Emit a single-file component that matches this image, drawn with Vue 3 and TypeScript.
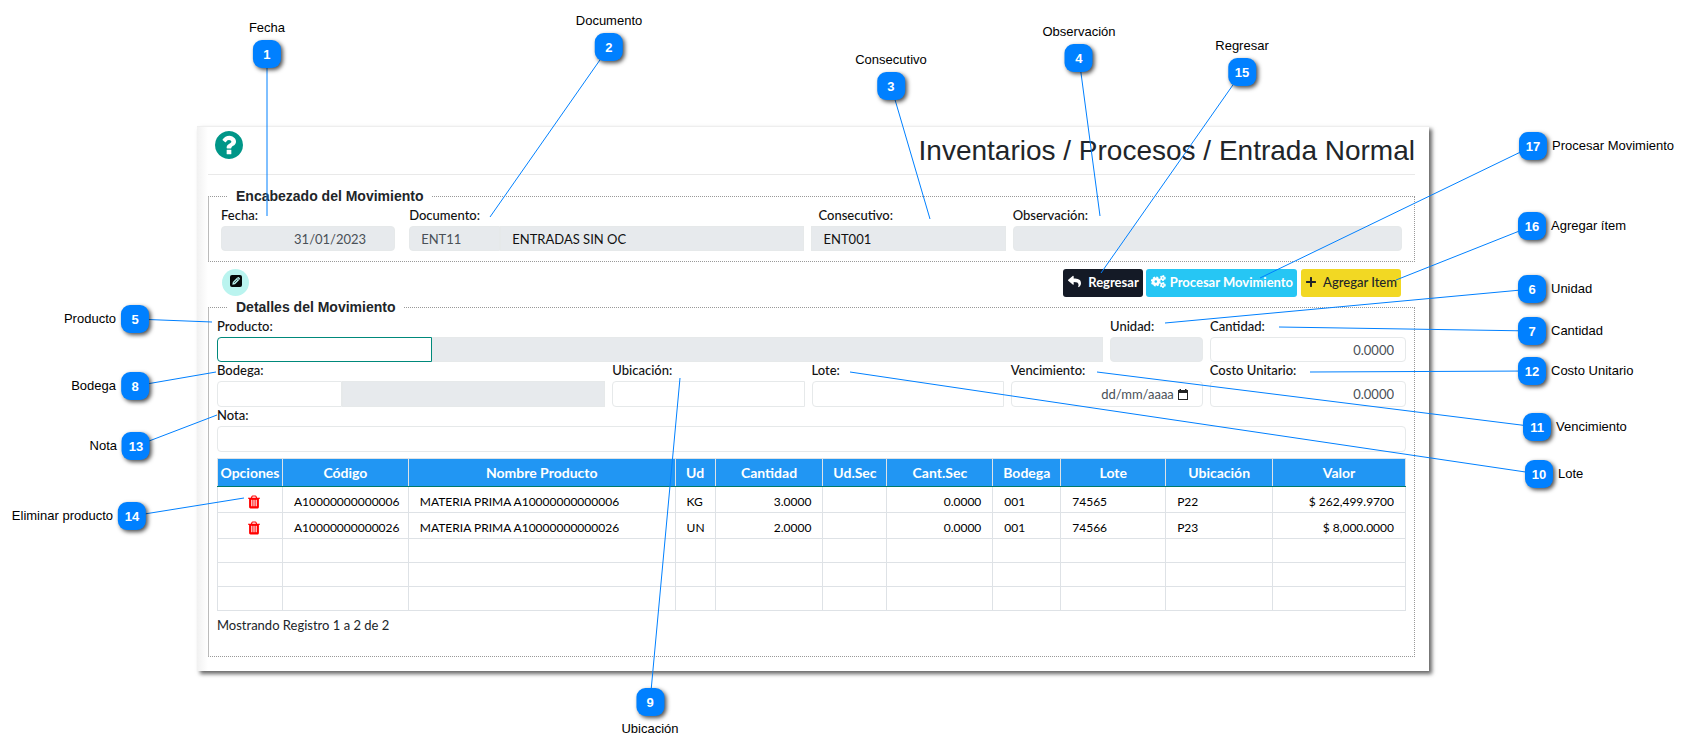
<script setup lang="ts">
import { ref } from 'vue'

type Side = 'top' | 'bottom' | 'left' | 'right'

interface Callout {
  n: number
  label: string
  x: number
  y: number
  tx: number
  ty: number
  side: Side
}

interface Item {
  codigo: string
  nombre: string
  ud: string
  cantidad: string
  udSec: string
  cantSec: string
  bodega: string
  lote: string
  ubicacion: string
  valor: string
}

const callouts: Callout[] = [
  { n: 1, label: 'Fecha', x: 267, y: 54, tx: 267, ty: 216, side: 'top' },
  { n: 2, label: 'Documento', x: 609, y: 47, tx: 490, ty: 217, side: 'top' },
  { n: 3, label: 'Consecutivo', x: 891, y: 86, tx: 930, ty: 219, side: 'top' },
  { n: 4, label: 'Observación', x: 1079, y: 58, tx: 1100, ty: 216, side: 'top' },
  { n: 5, label: 'Producto', x: 135, y: 319, tx: 212, ty: 322, side: 'left' },
  { n: 6, label: 'Unidad', x: 1532, y: 289, tx: 1165, ty: 323, side: 'right' },
  { n: 7, label: 'Cantidad', x: 1532, y: 331, tx: 1279, ty: 327, side: 'right' },
  { n: 8, label: 'Bodega', x: 135, y: 386, tx: 216, ty: 372, side: 'left' },
  { n: 9, label: 'Ubicación', x: 650, y: 702, tx: 680, ty: 378, side: 'bottom' },
  { n: 10, label: 'Lote', x: 1539, y: 474, tx: 850, ty: 372, side: 'right' },
  { n: 11, label: 'Vencimiento', x: 1537, y: 427, tx: 1097, ty: 372, side: 'right' },
  { n: 12, label: 'Costo Unitario', x: 1532, y: 371, tx: 1310, ty: 372, side: 'right' },
  { n: 13, label: 'Nota', x: 136, y: 446, tx: 217, ty: 415, side: 'left' },
  { n: 14, label: 'Eliminar producto', x: 132, y: 516, tx: 244, ty: 498, side: 'left' },
  { n: 15, label: 'Regresar', x: 1242, y: 72, tx: 1101, ty: 273, side: 'top' },
  { n: 16, label: 'Agregar ítem', x: 1532, y: 226, tx: 1396, ty: 280, side: 'right' },
  { n: 17, label: 'Procesar Movimiento', x: 1533, y: 146, tx: 1260, ty: 278, side: 'right' },
]

const columns = [
  { title: 'Opciones', w: 65 },
  { title: 'Código', w: 126 },
  { title: 'Nombre Producto', w: 267 },
  { title: 'Ud', w: 40 },
  { title: 'Cantidad', w: 108 },
  { title: 'Ud.Sec', w: 64 },
  { title: 'Cant.Sec', w: 106 },
  { title: 'Bodega', w: 68 },
  { title: 'Lote', w: 105 },
  { title: 'Ubicación', w: 107 },
  { title: 'Valor', w: 133 },
]
const totalWidth = columns.reduce((sum, c) => sum + c.w, 0)

const items = ref<Item[]>([
  { codigo: 'A10000000000006', nombre: 'MATERIA PRIMA A10000000000006', ud: 'KG', cantidad: '3.0000', udSec: '', cantSec: '0.0000', bodega: '001', lote: '74565', ubicacion: 'P22', valor: '$ 262,499.9700' },
  { codigo: 'A10000000000026', nombre: 'MATERIA PRIMA A10000000000026', ud: 'UN', cantidad: '2.0000', udSec: '', cantSec: '0.0000', bodega: '001', lote: '74566', ubicacion: 'P23', valor: '$ 8,000.0000' },
])

const producto = ref('')
const bodega = ref('')
const ubicacion = ref('')
const lote = ref('')
const vencimiento = ref('')
const nota = ref('')
const cantidad = ref('0.0000')
const costo = ref('0.0000')
</script>

<template>
  <div class="page">
    <main class="panel">
      <header class="head">
        <button class="help" type="button" aria-label="Ayuda">
          <svg viewBox="128 128 1536 1536" aria-hidden="true">
            <path d="M1024 1376v-192q0-14-9-23t-23-9h-192q-14 0-23 9t-9 23v192q0 14 9 23t23 9h192q14 0 23-9t9-23zm256-672q0-88-55.500-163t-138.500-116-170-41q-243 0-371 213-15 24 8 42l132 100q7 6 19 6 16 0 25-12 53-68 86-92 34-24 86-24 48 0 85.500 26t37.500 59q0 38-20 61t-68 45q-63 28-115.500 86.500t-52.500 125.500v36q0 14 9 23t23 9h192q14 0 23-9t9-23q0-19 21.500-49.500t54.500-49.500q32-18 49-28.500t46-35 44.500-48 28-60.500 12.500-81zm384 192q0 209-103 385.500t-279.500 279.500-385.500 103-385.500-103-279.500-279.500-103-385.500 103-385.500 279.500-279.500 385.500-103 385.500 103 279.500 279.500 103 385.500z" />
          </svg>
        </button>
        <h1>Inventarios / Procesos / Entrada Normal</h1>
      </header>

      <fieldset class="box header-box">
        <legend>Encabezado del Movimiento</legend>
        <div class="row header-row">
          <div class="field date-field">
            <label for="fecha">Fecha:</label>
            <input id="fecha" class="right date" value="31/01/2023" readonly>
          </div>
          <div class="field">
            <label for="documento">Documento:</label>
            <div class="group doc">
              <input id="documento" value="ENT11" readonly>
              <input class="strong" value="ENTRADAS SIN OC" aria-label="Nombre del documento" readonly>
            </div>
          </div>
          <div class="field">
            <label for="consecutivo" class="inset">Consecutivo:</label>
            <input id="consecutivo" class="strong square" value="ENT001" readonly>
          </div>
          <div class="field">
            <label for="observacion">Observación:</label>
            <input id="observacion" readonly>
          </div>
        </div>
      </fieldset>

      <div class="toolbar">
        <button class="edit" type="button" aria-label="Editar">
          <svg viewBox="0 0 12 12" aria-hidden="true">
            <rect width="12" height="12" rx="2" fill="#060a0a" />
            <path d="M2.300 9.700 2.800 7 7 2.800 9.200 5 5 9.200z" fill="#baf4ef" />
            <path d="M7.500 2.300q.7-.6 1.400 0l.8.8q.6.700 0 1.400l-.3.300-2.200-2.200z" fill="#baf4ef" />
            <path d="M4 7.900 7.400 4.500" stroke="#060a0a" stroke-width=".7" />
          </svg>
        </button>
        <div class="actions">
          <button class="btn dark" type="button">
            <svg class="reply" viewBox="0 0 512 512" aria-hidden="true">
              <path d="M8.309 189.836L184.313 37.851C199.719 24.546 224 35.347 224 56.015v80.053c160.629 1.839 288 34.032 288 186.258 0 61.441-39.581 122.309-83.333 154.132-13.653 9.931-33.111-2.533-28.077-18.631 45.344-145.012-21.507-183.510-176.590-185.742V360c0 20.700-24.300 31.453-39.687 18.164l-176.004-152c-11.071-9.562-11.086-26.753 0-36.328z" />
            </svg>
            Regresar
          </button>
          <button class="btn cyan" type="button">
            <svg class="cogs" viewBox="0 0 28 24" fill="none" stroke="currentColor" aria-hidden="true">
              <circle cx="9" cy="12" r="5" stroke-width="5" />
              <circle cx="9" cy="12" r="7.800" stroke-width="3" stroke-dasharray="3.600 2.520" />
              <circle cx="22" cy="5.500" r="2.800" stroke-width="2.800" />
              <circle cx="22" cy="5.500" r="4.500" stroke-width="2" stroke-dasharray="2.700 2" />
              <circle cx="22" cy="18.500" r="2.800" stroke-width="2.800" />
              <circle cx="22" cy="18.500" r="4.500" stroke-width="2" stroke-dasharray="2.700 2" />
            </svg>
            Procesar Movimiento
          </button>
          <button class="btn yellow" type="button">
            <svg class="plus" viewBox="0 0 10 10" aria-hidden="true">
              <path d="M4.400 0h1.200q.4 0 .4.400V4h3.600q.4 0 .4.400v1.200q0 .4-.4.400H6v3.600q0 .4-.4.400H4.400q-.4 0-.4-.4V6H.4Q0 6 0 5.600V4.400Q0 4 .4 4H4V.4Q4 0 4.400 0z" />
            </svg>
            Agregar Item
          </button>
        </div>
      </div>

      <fieldset class="box detail-box">
        <legend>Detalles del Movimiento</legend>
        <div class="row product-row">
          <div class="field">
            <label for="producto">Producto:</label>
            <div class="group product">
              <input id="producto" v-model="producto" class="focused">
              <input aria-label="Nombre del producto" readonly>
            </div>
          </div>
          <div class="field">
            <label for="unidad">Unidad:</label>
            <input id="unidad" readonly>
          </div>
          <div class="field">
            <label for="cantidad">Cantidad:</label>
            <input id="cantidad" v-model="cantidad" class="right">
          </div>
        </div>
        <div class="row store-row">
          <div class="field">
            <label for="bodega">Bodega:</label>
            <div class="group store">
              <input id="bodega" v-model="bodega">
              <input aria-label="Nombre de la bodega" readonly>
            </div>
          </div>
          <div class="field">
            <label for="ubicacion">Ubicación:</label>
            <input id="ubicacion" v-model="ubicacion" class="open">
          </div>
          <div class="field">
            <label for="lote">Lote:</label>
            <input id="lote" v-model="lote" class="open">
          </div>
          <div class="field">
            <label for="vencimiento">Vencimiento:</label>
            <div class="picker">
              <input id="vencimiento" v-model="vencimiento" class="right date" placeholder="dd/mm/aaaa">
              <svg viewBox="0 0 10 11" aria-hidden="true">
                <path d="M1.500 0h1.500v1h4V0h1.500v1H10v10H0V1h1.500zM1 4v6h8V4z" fill-rule="evenodd" />
              </svg>
            </div>
          </div>
          <div class="field">
            <label for="costo">Costo Unitario:</label>
            <input id="costo" v-model="costo" class="right">
          </div>
        </div>
        <div class="field note">
          <label for="nota">Nota:</label>
          <input id="nota" v-model="nota">
        </div>

        <table>
          <colgroup>
            <col v-for="c in columns" :key="c.title" :style="{ width: (c.w / totalWidth) * 100 + '%' }">
          </colgroup>
          <thead>
            <tr>
              <th v-for="c in columns" :key="c.title" scope="col">{{ c.title }}</th>
            </tr>
          </thead>
          <tbody>
            <tr v-for="item in items" :key="item.codigo" class="filled">
              <td class="options">
                <button class="trash" type="button" aria-label="Eliminar producto">
                  <svg viewBox="192 128 1408 1536" aria-hidden="true">
                    <path d="M704 1376v-704q0-14-9-23t-23-9h-64q-14 0-23 9t-9 23v704q0 14 9 23t23 9h64q14 0 23-9t9-23zm256 0v-704q0-14-9-23t-23-9h-64q-14 0-23 9t-9 23v704q0 14 9 23t23 9h64q14 0 23-9t9-23zm256 0v-704q0-14-9-23t-23-9h-64q-14 0-23 9t-9 23v704q0 14 9 23t23 9h64q14 0 23-9t9-23zm-544-992h448l-48-117q-7-9-17-11h-317q-10 2-17 11zm928 32v64q0 14-9 23t-23 9h-96v948q0 83-47 143.500t-113 60.500h-832q-66 0-113-58.500t-47-141.500v-952h-96q-14 0-23-9t-9-23v-64q0-14 9-23t23-9h309l70-167q15-37 54-63t79-26h320q40 0 79 26t54 63l70 167h309q14 0 23 9t9 23z" />
                  </svg>
                </button>
              </td>
              <td>{{ item.codigo }}</td>
              <td>{{ item.nombre }}</td>
              <td>{{ item.ud }}</td>
              <td class="num">{{ item.cantidad }}</td>
              <td>{{ item.udSec }}</td>
              <td class="num">{{ item.cantSec }}</td>
              <td>{{ item.bodega }}</td>
              <td>{{ item.lote }}</td>
              <td>{{ item.ubicacion }}</td>
              <td class="num">{{ item.valor }}</td>
            </tr>
            <tr v-for="r in 3" :key="r">
              <td v-for="c in columns" :key="c.title"></td>
            </tr>
          </tbody>
        </table>
        <p class="count">Mostrando Registro 1 a 2 de 2</p>
      </fieldset>
    </main>

    <svg class="lines" aria-hidden="true">
      <line v-for="c in callouts" :key="c.n" :x1="c.x" :y1="c.y" :x2="c.tx" :y2="c.ty" />
    </svg>
    <div
      v-for="c in callouts"
      :key="c.n"
      class="callout"
      :class="c.side"
      :style="{ left: c.x + 'px', top: c.y + 'px' }"
    >
      <span class="badge">{{ c.n }}</span>
      <span class="caption">{{ c.label }}</span>
    </div>
  </div>
</template>

<style>
body {
  margin: 0;
  background: #fff;
}
</style>

<style scoped>
* {
  box-sizing: border-box;
}

.page {
  position: relative;
  min-height: 100vh;
  padding: 126px 260px 82px 197px;
  overflow: hidden;
  font-family: Lato, "Liberation Sans", sans-serif;
  font-size: 13px;
  color: #212529;
}

.panel {
  padding: 0 14px 14px 11px;
  background: linear-gradient(90deg, #f1f1f1, #fff 11px);
  border-top: 1px solid #eee;
  box-shadow: 3px 3px 4px rgba(0, 0, 0, 0.6);
}

.head {
  display: flex;
  justify-content: space-between;
  align-items: flex-start;
  height: 48px;
  padding: 4px 0 0 7px;
  border-bottom: 1px solid #e9e9e9;
}

button {
  font: inherit;
  cursor: pointer;
}

.help {
  width: 28px;
  height: 28px;
  padding: 0;
  border: 0;
  background: none;
}

.help svg {
  display: block;
  fill: #009688;
}

h1 {
  margin: 0;
  font: 400 28px/40px "Liberation Sans", Arial, sans-serif;
}

.box {
  min-width: 0;
  margin: 0;
  padding: 1px 8px 0;
  border: 1px dotted #999;
  border-left: 1px solid #bbb;
}

legend {
  margin-left: 10px;
  padding: 0 9px;
  font: 700 14px/20px "Liberation Sans", Arial, sans-serif;
}

.header-box {
  margin-top: 11px;
  padding: 1px 12px 10px;
}

.header-box legend {
  margin-left: 6px;
}

.row {
  display: grid;
  column-gap: 7px;
}

.header-row {
  grid-template-columns: 181fr 395fr 194fr 389fr;
}

.date-field {
  padding-right: 7px;
}

.product-row {
  grid-template-columns: 886fr 93fr 196fr;
}

.store-row {
  grid-template-columns: 388fr 192fr 192fr 192fr 196fr;
}

.field {
  display: flex;
  flex-direction: column;
  min-width: 0;
}

label {
  height: 19px;
  line-height: 16px;
  color: #111;
  font-weight: 500;
  white-space: nowrap;
}

.inset {
  padding-left: 7px;
}

input {
  width: 100%;
  min-width: 0;
  height: 25px;
  padding: 0 11px;
  border: 1px solid #e6e9ea;
  border-radius: 4px;
  outline: 0;
  background: #fff;
  color: #495057;
  font: 400 13px/20px Lato, "Liberation Sans", sans-serif;
}

input[readonly] {
  background: #e7eaed;
}

input::placeholder {
  color: #495057;
  opacity: 1;
}

.strong {
  color: #111;
}

.square {
  border-radius: 0;
}

.open {
  border-radius: 4px 0 0 4px;
}

.right {
  text-align: right;
}

.date {
  padding-right: 28px;
}

.focused {
  border-color: #00897b;
}

.group {
  display: grid;
}

.group input:first-child {
  border-radius: 4px 0 0 4px;
}

.group input:last-child {
  border-radius: 0;
}

.doc {
  grid-template-columns: 91fr 304fr;
}

.product {
  grid-template-columns: 215fr 671fr;
}

.store {
  grid-template-columns: 125fr 263fr;
}

.picker {
  position: relative;
}

.picker svg {
  position: absolute;
  right: 15px;
  top: 8px;
  width: 10px;
  height: 11px;
  fill: #222;
}

.toolbar {
  display: flex;
  justify-content: space-between;
  margin: 7px 14px 0;
}

.edit {
  display: grid;
  place-items: start center;
  width: 27px;
  height: 27px;
  padding: 6px 0 0;
  border: 0;
  border-radius: 50%;
  background: #baf4ef;
}

.edit svg {
  width: 12px;
  height: 12px;
}

.actions {
  display: flex;
  gap: 3px;
}

.btn {
  display: flex;
  align-items: center;
  height: 28px;
  padding: 0 4px 3px 5px;
  border: 0;
  border-radius: 3px;
  color: #fff;
  font-weight: 700;
  white-space: nowrap;
}

.btn svg {
  fill: currentColor;
}

.dark {
  background: #141a26;
}

.cyan {
  background: #26c6f4;
}

.btn.cyan svg {
  fill: none;
}

.yellow {
  margin-left: 1px;
  background: #f2d823;
  color: #212529;
  font-weight: 500;
}

.reply {
  width: 13px;
  height: 13px;
  margin-right: 7px;
}

.cogs {
  width: 15px;
  height: 13px;
  margin-right: 4px;
}

.plus {
  width: 10px;
  height: 10px;
  margin-right: 7px;
}

.detail-box {
  padding-bottom: 22px;
}

.store-row input,
.note input {
  height: 26px;
}

table {
  width: 100%;
  margin-top: 6px;
  border-collapse: collapse;
  table-layout: fixed;
}

th {
  height: 28px;
  padding: 0;
  border: 1px solid #dee2e6;
  border-bottom: 1px solid #00796b;
  background: #2196f3;
  color: #fff;
  font-size: 14px;
  line-height: 20px;
  font-weight: 700;
}

td {
  height: 24px;
  padding: 0 11px;
  border: 1px solid #dee2e6;
  color: #000;
  font-size: 12px;
  line-height: 16px;
  white-space: nowrap;
}

.filled td {
  height: 26px;
  padding-top: 4px;
}

.num {
  text-align: right;
}

.filled .options {
  padding: 4px 0 0 8px;
  text-align: center;
  line-height: 14px;
}

.trash {
  padding: 0;
  border: 0;
  background: none;
  vertical-align: top;
}

.trash svg {
  display: block;
  width: 12px;
  height: 14px;
  fill: #f00;
}

.count {
  margin: 5px 0 0;
  line-height: 18px;
}

.lines {
  position: absolute;
  inset: 0;
  width: 100%;
  height: 100%;
  pointer-events: none;
}

.lines line {
  stroke: #0080ff;
  stroke-width: 1;
}

.callout {
  position: absolute;
  display: flex;
  align-items: center;
  gap: 5px;
  font: 13px/16px "Liberation Sans", Arial, sans-serif;
  color: #000;
  white-space: nowrap;
}

.badge {
  width: 28px;
  height: 28px;
  border-radius: 9px;
  background: #0080ff;
  box-shadow: 2px 2px 4px rgba(0, 0, 0, 0.7);
  color: #fff;
  font-weight: 700;
  line-height: 29px;
  text-align: center;
}

.callout.right {
  text-align: left;
  transform: translate(-14px, -50%);
}

.left {
  flex-direction: row-reverse;
  transform: translate(calc(-100% + 14px), -50%);
}

.top {
  flex-direction: column-reverse;
  gap: 4px;
  transform: translate(-50%, calc(-100% + 14px));
}

.bottom {
  flex-direction: column;
  transform: translate(-50%, -14px);
}
</style>
